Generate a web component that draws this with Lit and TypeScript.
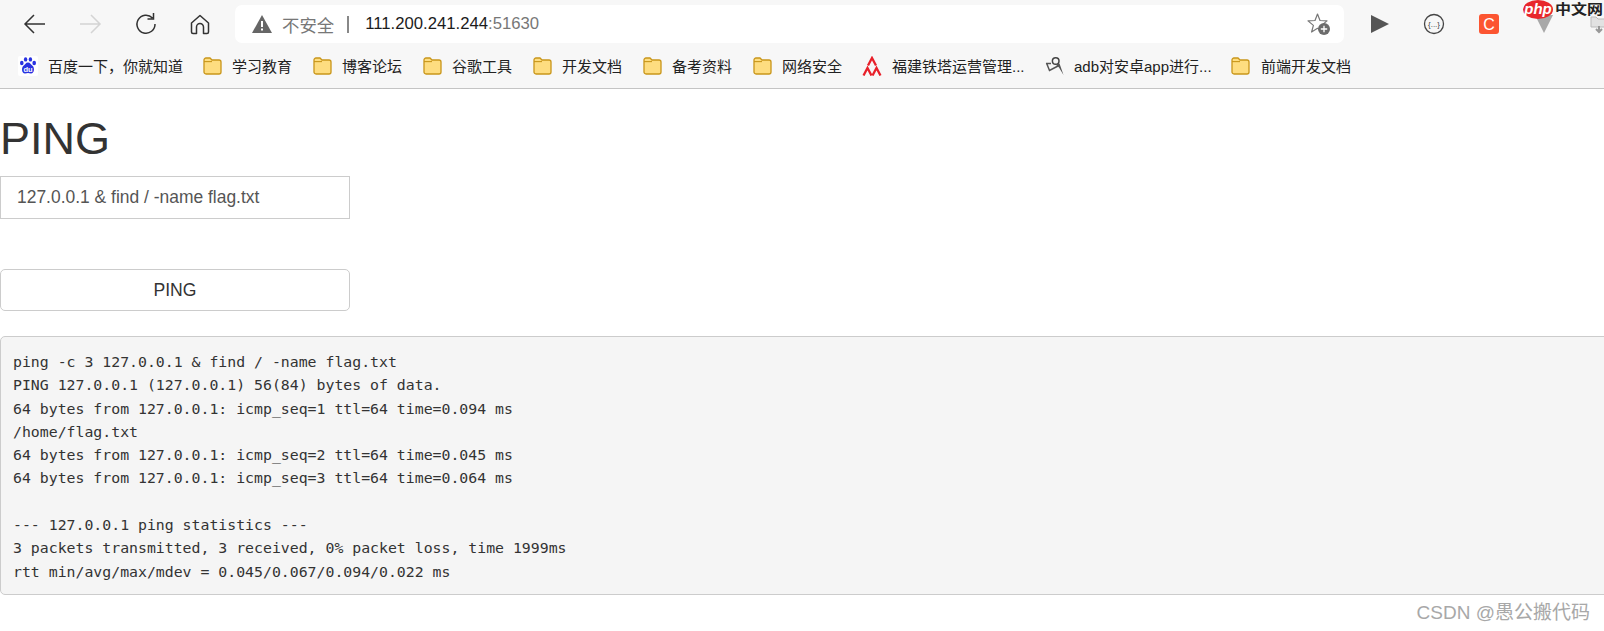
import { LitElement, html, css } from "lit";
import { customElement } from "lit/decorators.js";

const folder = html`<svg class="ico" viewBox="0 0 20 20" width="20" height="20"><path d="M2 4a2 2 0 0 1 2-2h4l2 2h7a2 2 0 0 1 2 2v10a2 2 0 0 1-2 2H4a2 2 0 0 1-2-2z" fill="#fedd80" stroke="#c9961a" stroke-width="1.300"/><path d="M2 5.600h8" stroke="#c9961a" stroke-width="1.100" fill="none"/></svg>`;
const baidu = html`<svg class="ico" viewBox="0 0 20 20" width="20" height="20"><rect width="20" height="20" rx="2" fill="#fff"/><g fill="#2932e1"><ellipse cx="3.800" cy="7" rx="1.800" ry="2.200"/><ellipse cx="7.600" cy="3.400" rx="1.700" ry="2.200"/><ellipse cx="12.400" cy="3.400" rx="1.700" ry="2.200"/><ellipse cx="16.200" cy="7" rx="1.800" ry="2.200"/><path d="M10 6.500c2.300 0 2.800 2 4.500 3.200 2.300 1.700 2 7.800-1.500 7.800-1.200 0-2-.4-3-.4s-1.800.4-3 .4c-3.500 0-3.800-6.100-1.500-7.800C7.200 8.500 7.700 6.500 10 6.500z"/></g><text x="10" y="16" font-size="7.500" fill="#fff" text-anchor="middle" font-family="Liberation Sans" font-weight="700">du</text></svg>`;
const tower = html`<svg class="ico" viewBox="0 0 20 20" width="20" height="20" fill="none" stroke="#e8202a" stroke-width="2.300"><path d="M6 9.500 10 2l4 7.500"/><path d="M1.500 19.500 5.500 12l4 7.500"/><path d="M10.500 19.500 14.500 12l4 7.500"/></svg>`;
const adb = html`<svg class="ico" viewBox="0 0 20 20" width="20" height="20"><circle cx="10.700" cy="5" r="3.300" fill="none" stroke="#444" stroke-width="1.500"/><path d="M1 7.500h5M1.500 7 4.500 14.500 13 10" fill="none" stroke="#555" stroke-width="1.500"/><path d="M10.500 8.500 14.500 7.500 18.500 19 14 11.500z" fill="#555"/></svg>`;

const marks = [
  { label: "百度一下，你就知道", icon: baidu, w: 184, gap: 10 },
  { label: "学习教育", icon: folder, w: 110, gap: 10 },
  { label: "博客论坛", icon: folder, w: 110, gap: 10 },
  { label: "谷歌工具", icon: folder, w: 110, gap: 10 },
  { label: "开发文档", icon: folder, w: 110, gap: 10 },
  { label: "备考资料", icon: folder, w: 110, gap: 10 },
  { label: "网络安全", icon: folder, w: 110, gap: 10 },
  { label: "福建铁塔运营管理...", icon: tower, w: 183, gap: 10 },
  { label: "adb对安卓app进行...", icon: adb, w: 185, gap: 9 },
  { label: "前端开发文档", icon: folder, w: 160, gap: 11 },
];

const output = `ping -c 3 127.0.0.1 & find / -name flag.txt
PING 127.0.0.1 (127.0.0.1) 56(84) bytes of data.
64 bytes from 127.0.0.1: icmp_seq=1 ttl=64 time=0.094 ms
/home/flag.txt
64 bytes from 127.0.0.1: icmp_seq=2 ttl=64 time=0.045 ms
64 bytes from 127.0.0.1: icmp_seq=3 ttl=64 time=0.064 ms

--- 127.0.0.1 ping statistics ---
3 packets transmitted, 3 received, 0% packet loss, time 1999ms
rtt min/avg/max/mdev = 0.045/0.067/0.094/0.022 ms`;

@customElement("app-root")
export class AppRoot extends LitElement {
  static styles = css`
    :host { display: block; width: 1604px; height: 631px; position: relative; overflow: hidden; background: #fff; font-family: "Liberation Sans", "Noto Sans CJK SC", sans-serif; color: #333; }
    .chrome { height: 88px; background: #f7f7f7; border-bottom: 1px solid #c4c4c4; }
    .toolbar { height: 48px; display: flex; align-items: center; padding-left: 21px; }
    .toolbar > * { flex: none; }
    .nav { height: 44px; display: flex; align-items: center; }
    .n1 { width: 57px; }
    .n2, .n3 { width: 55px; }
    .n4 { width: 47px; }
    .omni { width: 1109px; height: 38px; background: #fff; border-radius: 7px; display: flex; align-items: center; padding: 0 13px 0 17px; box-sizing: border-box; font-size: 16.700px; }
    .warn { margin-right: 10px; }
    .insecure { color: #777; font-family: "Noto Sans CJK SC", sans-serif; font-size: 17.400px; }
    .sep { width: 2px; height: 17px; background: #888; margin: 0 16px 0 13px; }
    .host { color: #1c1c1c; }
    .port { color: #777; }
    .fill { flex: 1; }
    .ext { display: flex; align-items: center; }
    .ext > * { flex: none; }
    .play { margin-left: 26px; }
    .code { margin-left: 33px; }
    .csdn { margin-left: 34px; }
    .tri { margin-left: 36px; }
    .dl { margin-left: 36px; }
    .marks { height: 35px; display: flex; align-items: center; padding-left: 18px; }
    .mark { display: flex; align-items: center; font-family: "Liberation Sans", "Noto Sans CJK SC", sans-serif; font-size: 15px; color: #222; white-space: nowrap; flex: none; }
    .ico { flex: none; }
    h1 { margin: 0; padding-top: 25px; font-size: 45px; font-weight: 400; line-height: 50px; height: 50px; color: #333; }
    .field { display: block; margin-top: 12px; width: 350px; height: 43px; box-sizing: border-box; border: 1px solid #ccc; padding: 0 16px; font: 17.450px "Liberation Sans", sans-serif; color: #555; background: #fff; outline: none; }
    .btn { display: block; margin-top: 50px; width: 350px; height: 42px; box-sizing: border-box; border: 1px solid #ccc; border-radius: 5px; background: #fff; font: 17.600px "Liberation Sans", sans-serif; color: #333; padding: 0; }
    pre { margin: 25px 0 0; width: 1640px; height: 259px; box-sizing: border-box; background: #f5f5f5; border: 1px solid #ccc; border-radius: 5px; padding: 13px 12px; font: 14.830px/23.300px "DejaVu Sans Mono", monospace; color: #333; }
    .php { position: absolute; left: 1523px; top: 0; display: flex; align-items: flex-start; }
    .php-badge { width: 30px; height: 19px; border-radius: 50%; background: #e8272c; color: #fff; font: italic 700 15px/17px "Liberation Sans", sans-serif; text-align: center; }
    .php-cn { font: 700 16px/16px "Noto Sans CJK SC", sans-serif; color: #222; margin: 2px 0 0 2px; transform: scaleY(0.82); transform-origin: top; white-space: nowrap; }
    .mark-csdn { position: absolute; right: 14px; top: 601px; font: 19px/24px "Liberation Sans", "Noto Sans CJK SC", sans-serif; color: #a8a8a8; }
  `;

  render() {
    return html`
      <div class="chrome">
        <div class="toolbar">
          <div class="nav n1"><svg width="26" height="26" viewBox="0 0 26 26" fill="none" stroke="#333" stroke-width="1.500"><path d="M4 13h20M13 4l-9 9 9 9"/></svg></div>
          <div class="nav n2"><svg width="26" height="26" viewBox="0 0 26 26" fill="none" stroke="#d4d4d4" stroke-width="1.500"><path d="M2 13h20M13 4l9 9-9 9"/></svg></div>
          <div class="nav n3"><svg width="26" height="26" viewBox="0 0 26 26" fill="none" stroke="#333" stroke-width="1.500"><path d="M19.500 7A9 9 0 1 0 22 13M20.500 2v6h-6"/></svg></div>
          <div class="nav n4"><svg width="24" height="24" viewBox="0 0 24 24" fill="none" stroke="#333" stroke-width="1.500" stroke-linejoin="round"><path d="M3.500 11 12 3.500 20.500 11v9a1.500 1.500 0 0 1-1.500 1.500h-3.500V15a3.500 3.500 0 0 0-7 0v6.500H5A1.500 1.500 0 0 1 3.500 20z"/></svg></div>
          <div class="omni">
            <svg class="warn" width="20" height="18" viewBox="0 0 20 18"><path d="M10 0 20 18H0z" fill="#666"/><rect x="9" y="6" width="2" height="6" fill="#fff"/><rect x="9" y="13.500" width="2" height="2" fill="#fff"/></svg>
            <span class="insecure">不安全</span><span class="sep"></span>
            <span class="host">111.200.241.244</span><span class="port">:51630</span>
            <span class="fill"></span>
            <svg width="24" height="24" viewBox="0 0 24 24"><path d="M10.500 2 13 8.500l7 .4-5.400 4.500L16.400 20l-5.900-3.700L4.600 20l1.800-6.600L1 8.900l7-.4z" fill="none" stroke="#777" stroke-width="1.200" stroke-linejoin="round"/><circle cx="17" cy="17" r="6" fill="#6b6b6b"/><path d="M13.800 17h6.400M17 13.800v6.400" stroke="#fff" stroke-width="1.300"/></svg>
          </div>
          <div class="ext">
            <svg class="play" width="20" height="20" viewBox="0 0 20 20"><path d="M1 1 19 10 1 19z" fill="#555"/></svg>
            <svg class="code" width="22" height="22" viewBox="0 0 22 22"><circle cx="11" cy="11" r="9.500" fill="none" stroke="#444" stroke-width="1.300"/><text x="11" y="14" font-size="8" text-anchor="middle" fill="#444" font-family="Liberation Sans">{...}</text></svg>
            <svg class="csdn" width="20" height="20" viewBox="0 0 20 20"><rect width="20" height="20" rx="3" fill="#fc5531"/><text x="10" y="16" font-size="16" text-anchor="middle" fill="#fff" font-family="Liberation Sans">C</text></svg>
            <svg class="tri" width="18" height="18" viewBox="0 0 18 18"><path d="M0 0h18L9 18z" fill="#a8a8a8"/></svg>
            <svg class="dl" width="20" height="20" viewBox="0 0 20 20"><path d="M2 3h5l2 2h9v8H2z" fill="#e2e2e2" stroke="#bbb"/><path d="M10 12v6M7 15l3 3 3-3" stroke="#999" fill="none" stroke-width="2"/></svg>
          </div>
        </div>
        <div class="marks">
          ${marks.map((m) => html`<div class="mark" style="width:${m.w}px;gap:${m.gap}px">${m.icon}<span>${m.label}</span></div>`)}
        </div>
      </div>
      <div>
        <h1>PING</h1>
        <input class="field" .value=${"127.0.0.1 & find / -name flag.txt"} />
        <button class="btn">PING</button>
        <pre>${output}</pre>
      </div>
      <div class="php"><span class="php-badge">php</span><span class="php-cn">中文网</span></div>
      <div class="mark-csdn">CSDN @愚公搬代码</div>
    `;
  }
}
